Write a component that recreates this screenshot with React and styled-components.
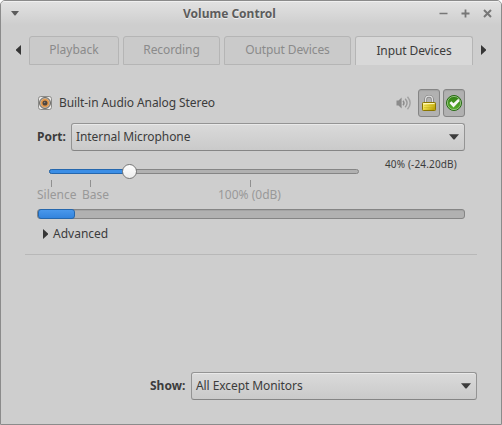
import React from "react";
import styled, { createGlobalStyle } from "styled-components";

const GlobalStyle = createGlobalStyle`
  * { box-sizing: border-box; }
  body { margin: 0; background: #fff; overflow: hidden; }
`;

const Window = styled.main`
  width: 502px;
  height: 425px;
  display: flex;
  flex-direction: column;
  border: 1px solid #8b8b8b;
  border-radius: 5px 5px 0 0;
  background: #cecece;
  color: #3c3c3c;
  font: 12px/18px "Noto Sans", sans-serif;
  overflow: hidden;
  white-space: nowrap;
`;

const TitleBar = styled.header`
  height: 24px;
  flex: none;
  display: grid;
  grid-template-columns: 182px 1fr 62px;
  align-items: center;
  border-top: 1px solid #f0f0f0;
  background: linear-gradient(#e1e1e1, #cecece);
`;

const Title = styled.h1`
  margin: 0;
  font-size: 12px;
  line-height: 18px;
  font-weight: 700;
  color: #5c5c5c;
  text-shadow: 0 1px 0 #eeeeee;
`;

const MenuSlot = styled.div`
  padding-left: 10px;
  display: flex;
`;

const WindowButtons = styled.div`
  display: flex;
  gap: 13px;
  padding-bottom: 1px;
`;

const Glyph = styled.svg`
  display: block;
  flex: none;
`;

const TabStrip = styled.nav`
  display: flex;
  height: 30px;
  margin: 11px 0 0 15px;
  align-items: flex-start;
`;

const TabArrow = styled.div`
  width: ${(p) => p.$width}px;
  padding: 9px 0 0 ${(p) => p.$inset || 0}px;
`;

const Tab = styled.div`
  width: ${(p) => p.$width}px;
  height: 29px;
  margin-right: 4px;
  flex: none;
  border: 1px solid #b5b5b5;
  border-radius: 3px 3px 0 0;
  border-bottom-width: ${(p) => (p.$active ? 0 : 1)}px;
  background: ${(p) => (p.$active ? "#d8d8d8" : "#cacaca")};
  color: ${(p) => (p.$active ? "#3c3c3c" : "#8b8b8b")};
  line-height: ${(p) => (p.$active ? 28 : 26)}px;
  letter-spacing: ${(p) => p.$tracking || 0}px;
  text-align: center;
`;

const Device = styled.section`
  width: 452px;
  height: 189px;
  margin: 0 0 0 24px;
  padding: 23px 12px 0;
  border-bottom: 1px solid #b8b8b8;
`;

const DeviceHeader = styled.div`
  display: flex;
  align-items: center;
  height: 28px;
`;

const DeviceName = styled.span`
  width: 337px;
  margin-left: 6px;
  letter-spacing: -0.08px;
`;

const ToggleButton = styled.button`
  width: 22px;
  height: 28px;
  margin-left: ${(p) => p.$gap}px;
  padding: 0;
  flex: none;
  display: grid;
  place-items: center;
  border: 1px solid #858585;
  border-radius: 3px;
  background: #b1b1b1;
  box-shadow: inset 0 1px 1px #a2a2a2;
`;

const Field = styled.div`
  display: flex;
  align-items: center;
  margin-top: ${(p) => p.$top || 0}px;
  margin-left: ${(p) => p.$left || 0}px;
`;

const FieldLabel = styled.label`
  width: ${(p) => p.$width}px;
  font-weight: 700;
`;

const Combo = styled.div`
  width: ${(p) => p.$width}px;
  height: 28px;
  padding: 0 5px 1px 4px;
  display: flex;
  align-items: center;
  justify-content: space-between;
  border: 1px solid #949494;
  border-bottom-color: #858585;
  border-radius: 3px;
  background: linear-gradient(#dadada, #cacaca);
  box-shadow: inset 0 1px 0 #e9e9e9;
  letter-spacing: -0.08px;
`;

const VolumeRow = styled.div`
  display: flex;
  height: 36px;
  margin-top: 4px;
`;

const Slider = styled.div`
  position: relative;
  width: 310px;
  height: 5px;
  margin: 14px 26px 0 12px;
  border: 1px solid #858585;
  border-radius: 3px;
  background: #b1b1b1;
`;

const SliderFill = styled.div`
  position: absolute;
  inset: -1px auto -1px -1px;
  width: 80px;
  border: 1px solid #2567ad;
  border-radius: 3px 0 0 3px;
  background: #3b8ee6;
`;

const Knob = styled.div`
  position: absolute;
  left: 72px;
  top: -6px;
  width: 15px;
  height: 15px;
  border: 1px solid #777;
  border-radius: 50%;
  background: linear-gradient(#fff, #ececec);
`;

const Volume = styled.output`
  font-size: 10px;
  line-height: 18px;
  letter-spacing: 0.15px;
`;

const Marks = styled.div`
  display: flex;
  height: 18px;
  margin-top: -10px;
  color: #999;
`;

const Mark = styled.div`
  width: ${(p) => p.$width}px;
  flex: none;
  line-height: 18px;
  &::before {
    content: "";
    display: block;
    width: 1px;
    height: 7px;
    margin: -1px 0 -1px ${(p) => p.$tick}px;
    background: #909090;
  }
`;

const Level = styled.div`
  height: 10px;
  margin-top: 10px;
  border: 1px solid #858585;
  border-radius: 3px;
  background: #b1b1b1;
  box-shadow: inset 0 1px 0 #a4a4a4;
`;

const LevelFill = styled.div`
  width: 37px;
  height: 10px;
  margin: -1px 0;
  border: 1px solid #2567ad;
  border-radius: 3px;
  background: linear-gradient(#4998ec, #3384dd);
`;

const Expander = styled.div`
  display: flex;
  align-items: center;
  gap: 5px;
  margin: 6px 0 0 6px;
`;

const Spacer = styled.div`
  flex: 1;
`;

const Footer = styled.footer`
  height: 52px;
`;

const DownArrow = () => (
  <Glyph width="10" height="6" viewBox="0 0 10 6">
    <path d="M0 .3h10L5.5 5.4h-1z" fill="#3c3c3c" />
  </Glyph>
);

const SideArrow = ({ left }) => (
  <Glyph width="5" height="10" viewBox="0 0 5 10">
    <path d={left ? "M5 0v10L0 5.5v-1z" : "M0 0v10l5-4.5v-1z"} fill="#363636" />
  </Glyph>
);

const SoundCardIcon = () => (
  <Glyph width="16" height="16" viewBox="0 0 16 16">
    <rect x="1.5" y="1.5" width="13" height="13" rx="2.2" fill="#eceae8" stroke="#8b8b89" />
    <circle cx="8" cy="8" r="5.5" fill="#bdb4a8" stroke="#5f5d5a" strokeWidth=".9" />
    <circle cx="8" cy="8" r="3.4" fill="#5c4a3c" stroke="#e69a4c" strokeWidth="1.7" />
    <circle cx="8" cy="8" r="1.8" fill="#4a4542" />
    <circle cx="7.6" cy="7.5" r=".8" fill="#8d847c" />
  </Glyph>
);

const SpeakerIcon = () => (
  <Glyph width="16" height="16" viewBox="0 0 16 16">
    <path d="M.5 5.5h2L5.6 2.5v11L2.5 10.5h-2z" fill="#8b8b8b" />
    <g fill="none" stroke="#8b8b8b" strokeWidth="1.4">
      <path d="M7 5.7q2 2.3 0 4.6" />
      <path d="M9.2 3.7q3.7 4.3 0 8.6" stroke="#999" />
      <path d="M11.5 1.7q5.3 6.3 0 12.6" stroke="#a2a2a2" />
    </g>
  </Glyph>
);

const LockIcon = () => (
  <Glyph width="16" height="16" viewBox="0 0 16 16">
    <defs>
      <linearGradient id="brass" x2="1" y2=".6">
        <stop offset="0" stopColor="#fff9a8" />
        <stop offset=".45" stopColor="#eadb45" />
        <stop offset="1" stopColor="#bda508" />
      </linearGradient>
    </defs>
    <path d="M4.6 8V4.6a3.4 3.4 0 0 1 6.8 0V8" fill="none" stroke="#808080" strokeWidth="2.8" />
    <path d="M4.6 8V4.6a3.4 3.4 0 0 1 6.8 0V8" fill="none" stroke="#dedede" strokeWidth="1.3" />
    <rect x="1.5" y="7.5" width="13" height="8" rx=".8" fill="url(#brass)" stroke="#8a7600" />
    <path d="M2.5 8.5h11" stroke="#fff7b5" />
    <path d="M3 10.5h10M3 12.5h10" stroke="#c2aa19" strokeWidth=".4" />
  </Glyph>
);

const CheckIcon = () => (
  <Glyph width="16" height="16" viewBox="0 0 16 16">
    <defs>
      <linearGradient id="leaf" x2="0" y2="1">
        <stop offset="0" stopColor="#2f7d14" />
        <stop offset="1" stopColor="#5bb02f" />
      </linearGradient>
    </defs>
    <circle cx="8" cy="8" r="7.5" fill="url(#leaf)" stroke="#276b16" />
    <circle cx="8" cy="8" r="6.6" fill="none" stroke="#a3cd90" strokeWidth=".8" />
    <path d="M3.4 7.9l2-1.7 2.1 2 4.8-4.4 1.4 2.3-6.2 6.3z" fill="#f5f5f5" />
  </Glyph>
);

export default function App() {
  return (
    <>
      <GlobalStyle />
      <Window>
        <TitleBar>
          <MenuSlot>
            <Glyph width="8" height="5" viewBox="0 0 8 5">
              <path d="M0 0h8L4.4 4.5h-.8z" fill="#5c5c5c" />
            </Glyph>
          </MenuSlot>
          <Title>Volume Control</Title>
          <WindowButtons>
            <Glyph width="9" height="9" viewBox="0 0 9 9">
              <path d="M.5 4.5h8" stroke="#777" strokeWidth="1.6" />
            </Glyph>
            <Glyph width="9" height="9" viewBox="0 0 9 9">
              <path d="M.5 4.5h8M4.5.5v8" stroke="#777" strokeWidth="1.8" />
            </Glyph>
            <Glyph width="9" height="9" viewBox="0 0 9 9">
              <path d="M1 1l7 7M8 1L1 8" stroke="#777" strokeWidth="2" />
            </Glyph>
          </WindowButtons>
        </TitleBar>

        <TabStrip>
          <TabArrow $width={13}><SideArrow left /></TabArrow>
          <Tab $width={90}>Playback</Tab>
          <Tab $width={97} $tracking={-0.1}>Recording</Tab>
          <Tab $width={127} $tracking={-0.12}>Output Devices</Tab>
          <Tab $width={118} $tracking={-0.1} $active>Input Devices</Tab>
          <TabArrow $width={9} $inset={4}><SideArrow /></TabArrow>
        </TabStrip>

        <Device>
          <DeviceHeader>
            <SoundCardIcon />
            <DeviceName>Built-in Audio Analog Stereo</DeviceName>
            <SpeakerIcon />
            <ToggleButton $gap={6} aria-label="Lock channels"><LockIcon /></ToggleButton>
            <ToggleButton $gap={3} aria-label="Set as fallback"><CheckIcon /></ToggleButton>
          </DeviceHeader>
          <Field $top={6}>
            <FieldLabel $width={34}>Port:</FieldLabel>
            <Combo $width={394}>Internal Microphone<DownArrow /></Combo>
          </Field>
          <VolumeRow>
            <Slider>
              <SliderFill />
              <Knob />
            </Slider>
            <Volume>40% (-24.20dB)</Volume>
          </VolumeRow>
          <Marks>
            <Mark $width={45} $tick={14}>Silence</Mark>
            <Mark $width={136} $tick={8}>Base</Mark>
            <Mark $width={80} $tick={32}>100% (0dB)</Mark>
          </Marks>
          <Level><LevelFill /></Level>
          <Expander><SideArrow />Advanced</Expander>
        </Device>

        <Spacer />
        <Footer>
          <Field $left={149}>
            <FieldLabel $width={41}>Show:</FieldLabel>
            <Combo $width={286}>All Except Monitors<DownArrow /></Combo>
          </Field>
        </Footer>
      </Window>
    </>
  );
}
